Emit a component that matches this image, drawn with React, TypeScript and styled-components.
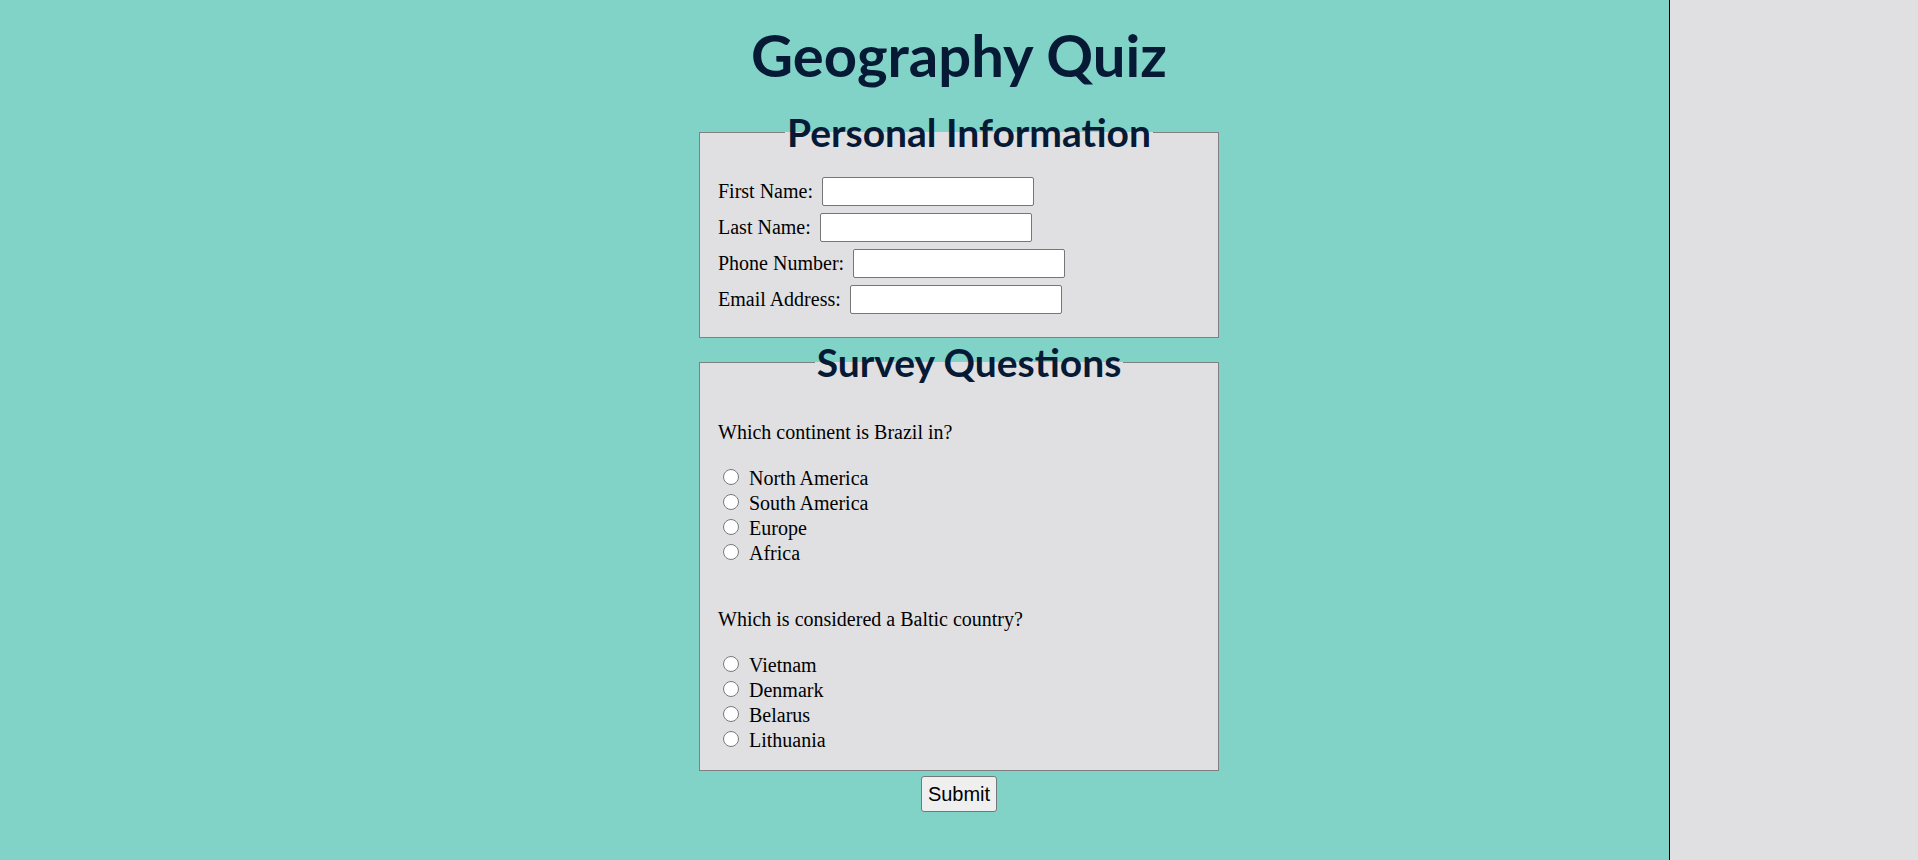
import React from "react";
import styled, { createGlobalStyle } from "styled-components";

const GlobalStyle = createGlobalStyle`
  html, body {
    margin: 0;
    padding: 0;
  }
  body {
    font-family: "Liberation Serif", "Times New Roman", serif;
    font-size: 20px;
    color: #000;
    background: linear-gradient(
      to right,
      #82d3c7 0,
      #82d3c7 1669px,
      #000 1669px,
      #000 1670px,
      #e0e0e2 1670px
    );
    min-height: 860px;
  }
`;

const Page = styled.div`
  min-height: 860px;
  padding-top: 21px;
  box-sizing: border-box;
  display: flex;
  flex-direction: column;
  align-items: center;
`;

const Title = styled.h1`
  margin: 0 0 20px;
  font-family: Lato, "Open Sans", sans-serif;
  font-weight: 700;
  font-size: 58px;
  line-height: 67px;
  color: #061a36;
  text-align: center;
`;

const Form = styled.form`
  display: flex;
  flex-direction: column;
  align-items: center;
`;

const Fieldset = styled.fieldset<{ $pt: number; $pb: number }>`
  width: 520px;
  box-sizing: border-box;
  margin: 0;
  padding: ${(p) => p.$pt}px 8px ${(p) => p.$pb}px 28px;
  border: 1px solid #808080;
  background: #e0e0e2;
  min-inline-size: 0;
`;

const Legend = styled.legend`
  margin: 0 auto;
  padding: 0 2px;
  font-family: Lato, "Open Sans", sans-serif;
  font-weight: 700;
  font-size: 39px;
  line-height: 48px;
  color: #061a36;
`;

const FieldsetBody = styled.div`
  margin-left: -10px;
`;

const Fields = styled.div`
  display: flex;
  flex-direction: column;
  gap: 7px;
`;

const FieldRow = styled.label`
  display: flex;
  align-items: center;
  height: 29px;
  line-height: 23px;
`;

const TextInput = styled.input`
  width: 212px;
  height: 29px;
  box-sizing: border-box;
  margin: 0 0 0 9px;
  padding: 1px 3px;
  border: 1px solid #767676;
  border-radius: 2px;
  background: #fff;
  font-family: "Liberation Sans", Arial, sans-serif;
  font-size: 16px;
`;

const Question = styled.div<{ $mt: number }>`
  margin-top: ${(p) => p.$mt}px;
`;

const Prompt = styled.p`
  margin: 0 0 22px;
  line-height: 23px;
`;

const Options = styled.div`
  display: flex;
  flex-direction: column;
`;

const OptionRow = styled.label`
  display: flex;
  align-items: center;
  height: 25px;
  line-height: 23px;
`;

const Radio = styled.input`
  width: 16px;
  height: 16px;
  margin: -3px 10px 0 5px;
  accent-color: #1a73e8;
`;

const SubmitButton = styled.button`
  margin-top: 5px;
  height: 36px;
  padding: 0 6px;
  box-sizing: border-box;
  border: 1px solid #767676;
  border-radius: 3px;
  background: #efefef;
  color: #000;
  font-family: "Liberation Sans", Arial, sans-serif;
  font-size: 20px;
  line-height: 22px;
`;

const personal = [
  { id: "first", label: "First Name:" },
  { id: "last", label: "Last Name:" },
  { id: "phone", label: "Phone Number:" },
  { id: "email", label: "Email Address:" },
];

const questions = [
  {
    name: "q1",
    prompt: "Which continent is Brazil in?",
    options: ["North America", "South America", "Europe", "Africa"],
  },
  {
    name: "q2",
    prompt: "Which is considered a Baltic country?",
    options: ["Vietnam", "Denmark", "Belarus", "Lithuania"],
  },
];

export default function App() {
  return (
    <>
      <GlobalStyle />
      <Page>
        <Title>Geography Quiz</Title>
        <Form onSubmit={(e) => e.preventDefault()}>
          <Fieldset $pt={21} $pb={23}>
            <Legend>Personal Information</Legend>
            <FieldsetBody>
              <Fields>
                {personal.map((f) => (
                  <FieldRow key={f.id}>
                    {f.label}
                    <TextInput type="text" name={f.id} />
                  </FieldRow>
                ))}
              </Fields>
            </FieldsetBody>
          </Fieldset>
          <Fieldset $pt={35} $pb={17}>
            <Legend>Survey Questions</Legend>
            <FieldsetBody>
              {questions.map((q, i) => (
                <Question key={q.name} $mt={i === 0 ? 0 : 42}>
                  <Prompt>{q.prompt}</Prompt>
                  <Options>
                    {q.options.map((o) => (
                      <OptionRow key={o}>
                        <Radio type="radio" name={q.name} value={o} />
                        {o}
                      </OptionRow>
                    ))}
                  </Options>
                </Question>
              ))}
            </FieldsetBody>
          </Fieldset>
          <SubmitButton type="submit">Submit</SubmitButton>
        </Form>
      </Page>
    </>
  );
}
